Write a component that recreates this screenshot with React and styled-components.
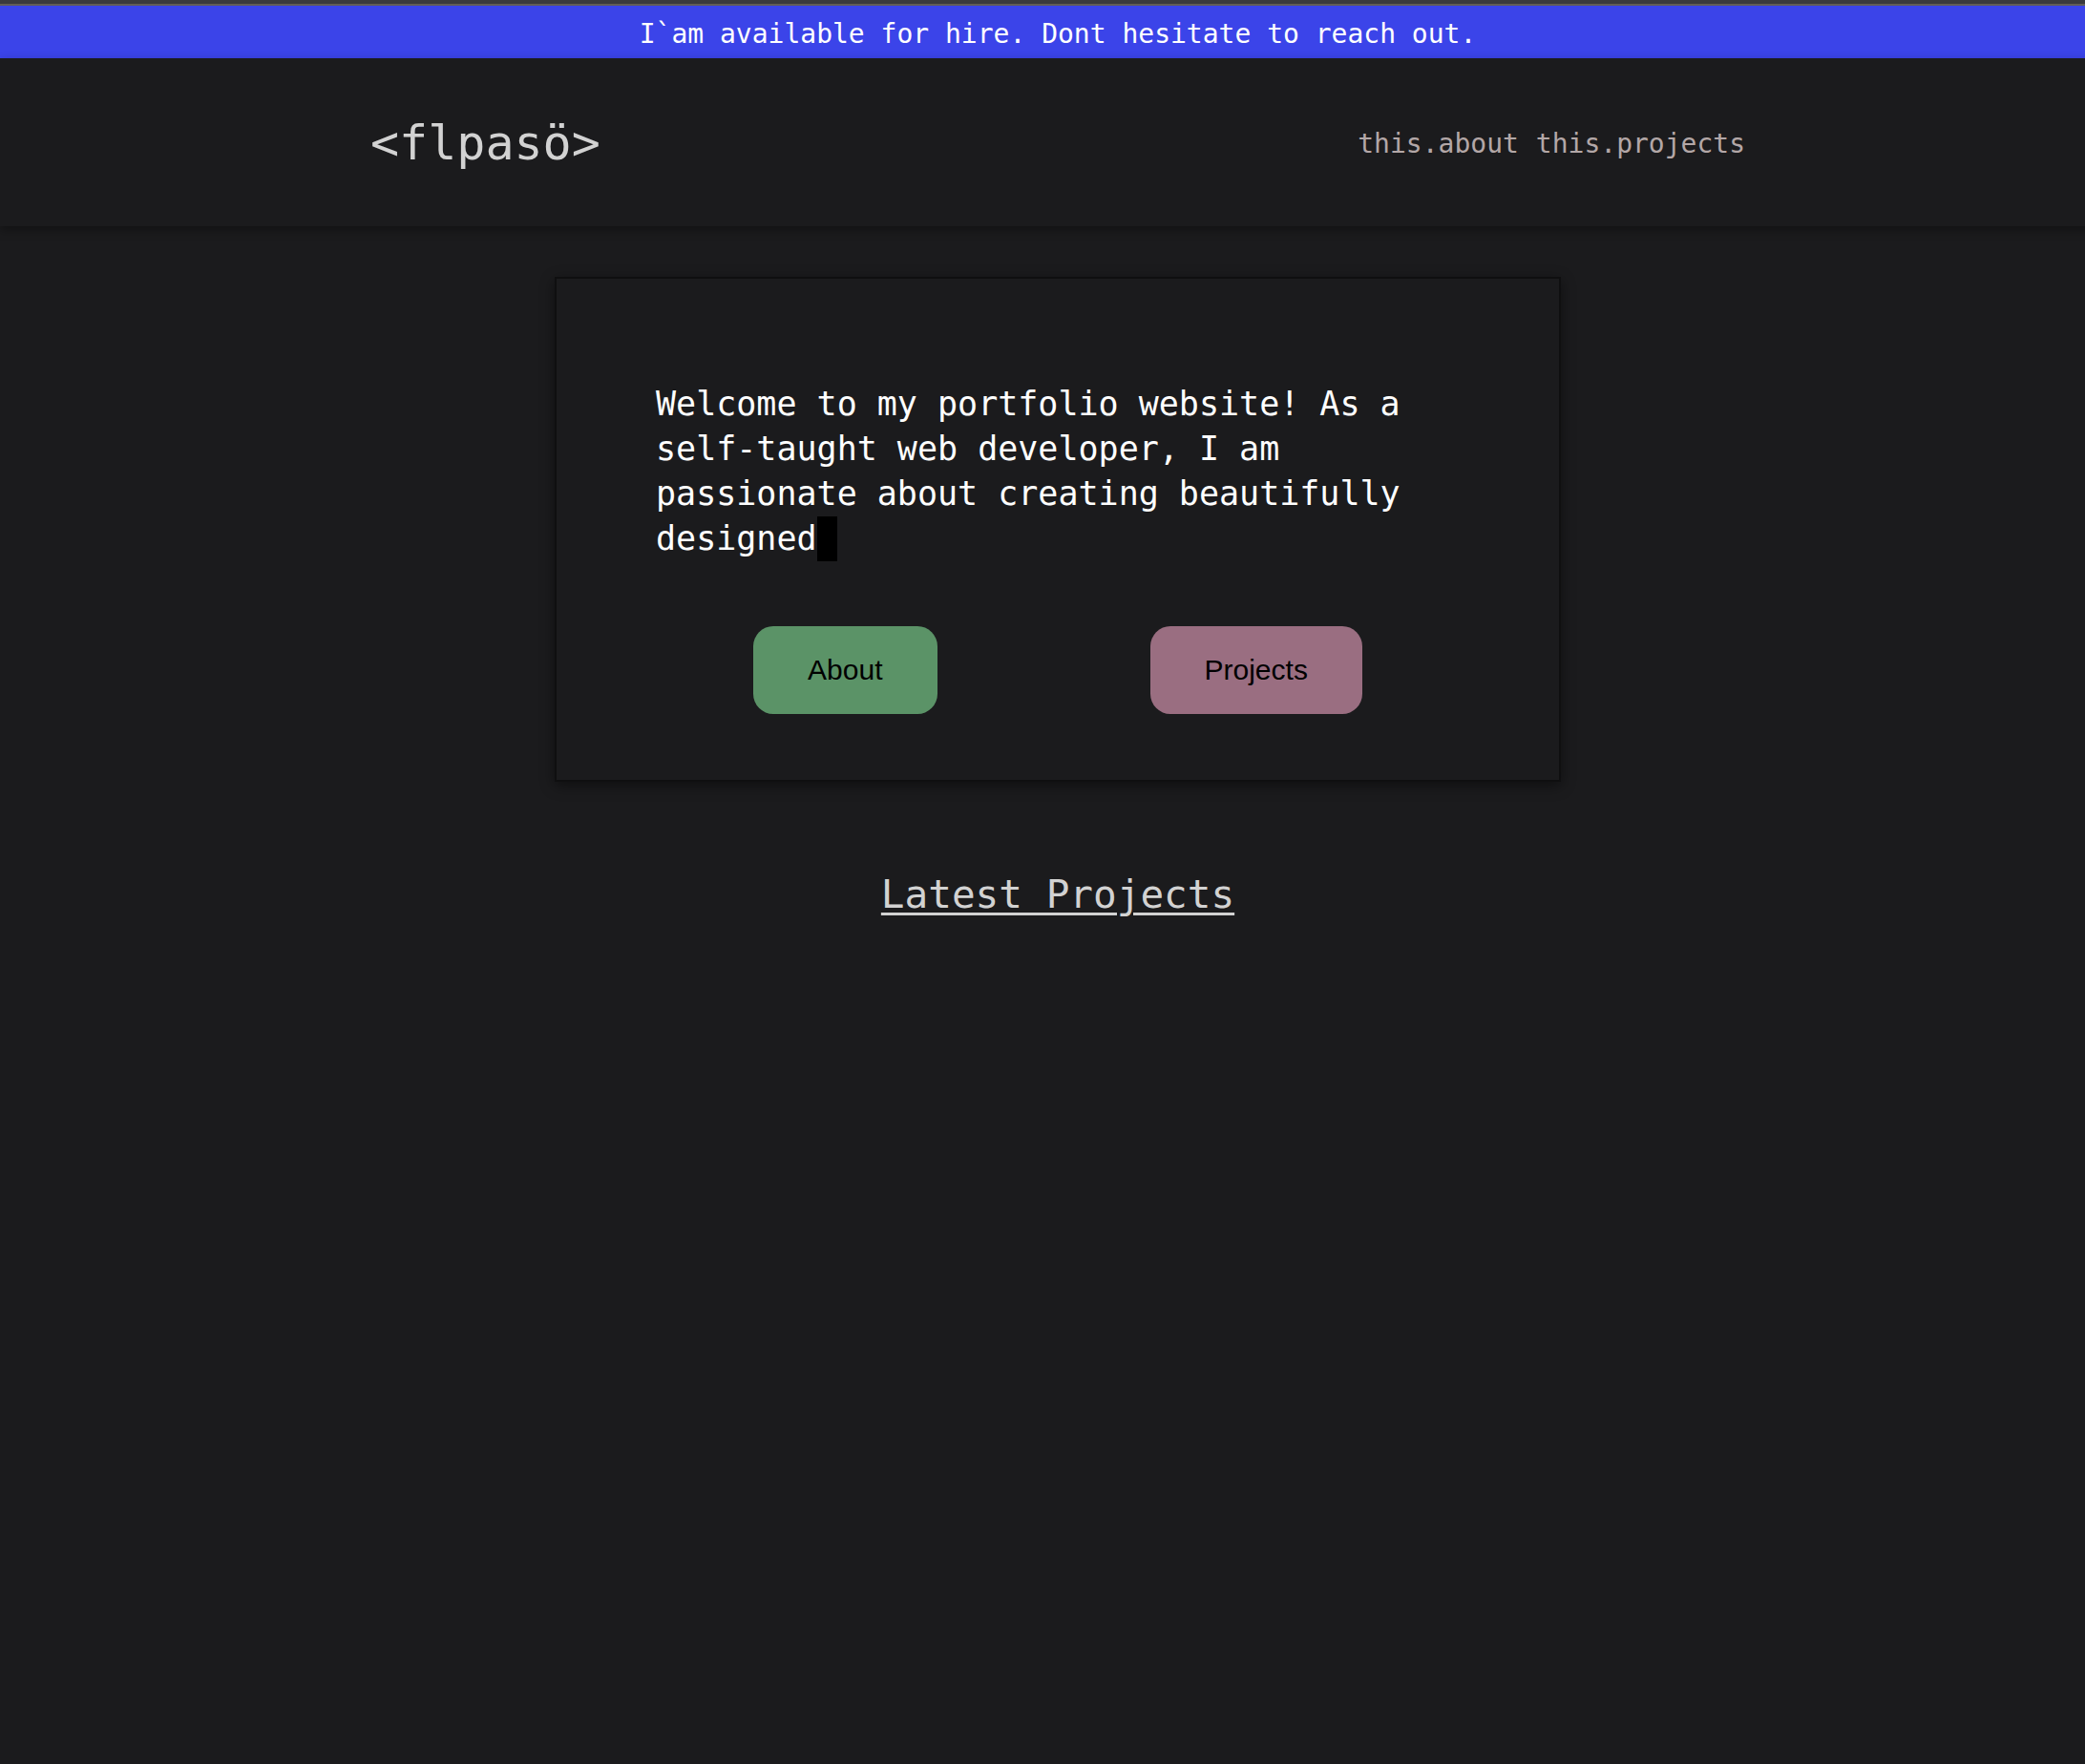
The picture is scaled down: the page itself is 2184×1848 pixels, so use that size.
import React from 'react';
import styled, { createGlobalStyle } from 'styled-components';

const GlobalStyle = createGlobalStyle`
  html, body {
    margin: 0;
    padding: 0;
    background: #1b1b1d;
    overflow-x: hidden;
  }
  * { box-sizing: border-box; }
`

const mono = `"DejaVu Sans Mono", "Liberation Mono", monospace`

function App() {
  return <Page>
    <GlobalStyle />
    <TopLine />
    <Banner>I`am available for hire. Dont hesitate to reach out.</Banner>
    <Header>
      <div className="inner">
        <Logo>&lt;flpasö&gt;</Logo>
        <Nav>
          <a href="#about">this.about</a>
          <a href="#projects">this.projects</a>
        </Nav>
      </div>
    </Header>
    <Main>
      <Card>
        <Intro>
          Welcome to my portfolio website! As a self-taught web developer, I am passionate about creating beautifully designed<Cursor />
        </Intro>
        <Actions>
          <Button color="#5b9367">About</Button>
          <Button color="#9a6e81">Projects</Button>
        </Actions>
      </Card>
      <SectionTitle>Latest Projects</SectionTitle>
    </Main>
  </Page>;
}

export default App;

const Page = styled.div`
  width: calc(100% + 32px);
  min-height: 1848px;
  background: #1b1b1d;
  font-family: ${mono};
`

const TopLine = styled.div`
  height: 6px;
  background: #3a3a3d;
  border-bottom: 2px solid #625d57;
`

const Banner = styled.div`
  height: 55px;
  padding-top: 3px;
  background: #3b44e9;
  color: #ffffff;
  font-size: 28px;
  display: flex;
  align-items: center;
  justify-content: center;
  white-space: pre;
`

const Header = styled.header`
  height: 176px;
  background: #1b1b1d;
  box-shadow: 0 4px 10px rgba(0, 0, 0, 0.35);
  position: relative;
  .inner{
    width: 1440px;
    height: 100%;
    margin: 0 auto;
    padding-top: 2px;
    display: flex;
    align-items: center;
    justify-content: space-between;
  }
`

const Logo = styled.div`
  font-size: 50px;
  color: #d2d2d2;
`

const Nav = styled.nav`
  display: flex;
  gap: 18px;
  >a{
    font-size: 28px;
    color: #b3a7a7;
    text-decoration: none;
  }
`

const Main = styled.main`
  display: flex;
  flex-direction: column;
  align-items: center;
  padding-top: 53px;
`

const Card = styled.section`
  width: 1054px;
  height: 529px;
  border: 2px solid #0f0f10;
  background: #1b1b1d;
  box-shadow: 0 4px 14px rgba(0, 0, 0, 0.45);
  padding: 108px 104px 0;
  display: flex;
  flex-direction: column;
`

const Intro = styled.p`
  margin: 0;
  color: #ffffff;
  font-size: 35px;
  line-height: 47px;
`

const Cursor = styled.span`
  display: inline-block;
  width: 0.6em;
  height: 47px;
  vertical-align: top;
  background: #000000;
`

const Actions = styled.div`
  display: flex;
  justify-content: center;
  gap: 223px;
  margin-top: 68px;
`

const Button = styled.button`
  height: 92px;
  padding: 0 57px;
  border: none;
  border-radius: 21px;
  background: ${p => p.color};
  color: #000000;
  font-family: "Liberation Sans", Arial, sans-serif;
  font-size: 30px;
  cursor: pointer;
  &:hover{
    opacity: .9;
  }
`

const SectionTitle = styled.h2`
  margin: 94px 0 0;
  font-size: 41px;
  font-weight: 400;
  line-height: normal;
  color: #d2d2d2;
  text-decoration: underline;
  text-decoration-thickness: 3px;
  text-underline-offset: 5px;
`
